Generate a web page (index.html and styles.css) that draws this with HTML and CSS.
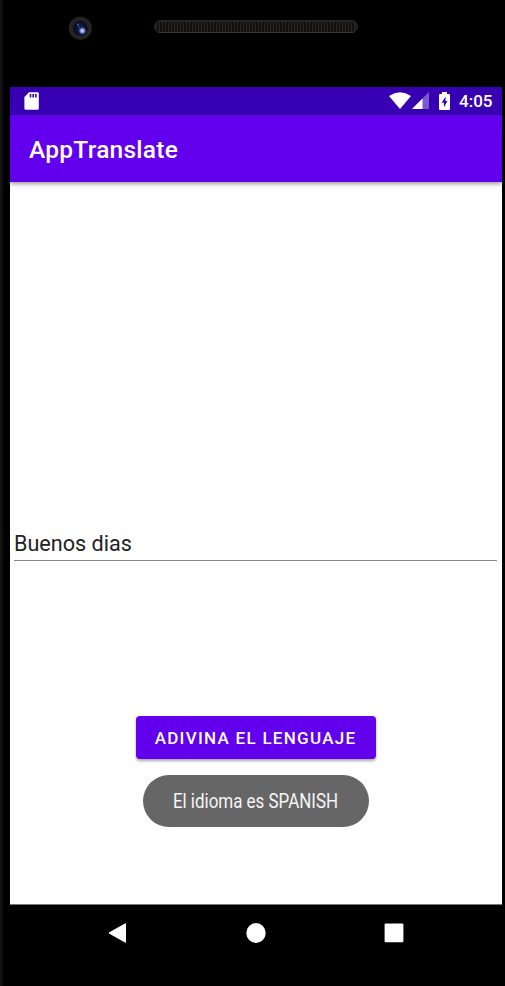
FILE: index.html
```
<!DOCTYPE html>
<html lang="es">
<head>
<meta charset="utf-8">
<title>AppTranslate</title>
<link rel="stylesheet" href="styles.css">
</head>
<body>
<div class="phone">
  <div class="bezel">
    <svg class="camera" width="24" height="24" viewBox="0 0 24 24">
      <defs>
        <radialGradient id="lens"><stop offset="0" stop-color="#18245c"/><stop offset=".65" stop-color="#0c1233"/><stop offset="1" stop-color="#0b0b0e"/></radialGradient>
        <radialGradient id="glint"><stop offset="0" stop-color="#e0e8ff"/><stop offset=".5" stop-color="#7189dc"/><stop offset="1" stop-color="#26367a" stop-opacity="0"/></radialGradient>
      </defs>
      <circle cx="12.300" cy="12.200" r="11.500" fill="#242424"/>
      <circle cx="12.300" cy="12.200" r="7.400" fill="url(#lens)"/>
      <circle cx="14.300" cy="14.800" r="4.300" fill="url(#glint)"/>
      <circle cx="10" cy="8.400" r="1" fill="#4861b5"/>
      <circle cx="11" cy="11" r=".8" fill="#354c9a"/>
    </svg>
    <div class="speaker"></div>
  </div>
  <main class="screen">
    <div class="status">
      <svg class="sd" width="15" height="18" viewBox="0 0 15 18"><path d="M5 .2h8.400q1.400 0 1.400 1.400v14.600q0 1.500-1.400 1.500H2Q.4 17.700.4 16.200V5z" fill="#fff"/><path d="M6.500 2v3.500M9.200 2v3.500M11.900 2v3.500" stroke="#3700b3" stroke-width="1.600"/></svg>
      <svg class="wifi" width="22" height="17" viewBox="0 0 22 17"><path d="M0 4Q11-3.400 22 4L11 17z" fill="#fff"/></svg>
      <svg class="signal" width="17" height="17" viewBox="0 0 17 17"><path d="M17 0v17H0z" fill="#fff" opacity=".35"/><path d="M10.500 6.500V17H0z" fill="#fff"/></svg>
      <svg class="battery" width="11" height="18" viewBox="0 0 11 18"><path d="M3 0h5v2h2q1 0 1 1v14q0 1-1 1H1q-1 0-1-1V3q0-1 1-1h2z" fill="#fff"/><path d="M6.500 4.500 2.700 10.700h2.200v4.600L8.500 9H6.500z" fill="#3700b3"/></svg>
      <span class="time">4:05</span>
    </div>
    <header class="appbar"><h1>AppTranslate</h1></header>
    <section class="content">
      <div class="field"><span>Buenos dias</span></div>
      <button class="guess"><span>ADIVINA EL LENGUAJE</span></button>
      <div class="toast"><span>El idioma es SPANISH</span></div>
    </section>
  </main>
  <nav class="nav">
    <svg width="20" height="22" viewBox="0 0 20 22"><path d="M2 11 18.500 1.700v18.600z" fill="#fff" stroke="#fff" stroke-linejoin="round"/></svg>
    <svg width="20" height="22" viewBox="0 0 20 22"><ellipse cx="10" cy="11" rx="9.700" ry="10" fill="#fff"/></svg>
    <svg width="20" height="22" viewBox="0 0 20 22"><rect x=".6" y="1.600" width="18.800" height="18.600" rx="1" fill="#fff"/></svg>
  </nav>
</div>
</body>
</html>
```
FILE: styles.css
```
* { box-sizing: border-box; }
body { margin: 0; background: #000; font-family: Roboto, sans-serif; }
.phone {
  width: 505px;
  height: 986px;
  padding: 0 3px 0 10px;
  background: linear-gradient(90deg, #151515 0, #111 2px, #000 4px);
  overflow: hidden;
}
.bezel { height: 87px; display: flex; align-items: flex-start; }
.camera { margin: 16px 0 0 58px; }
.speaker {
  width: 204px;
  height: 13px;
  margin: 20px 0 0 62px;
  border: 2px solid #252325;
  border-bottom: 1px solid #3b3936;
  border-radius: 7px;
  background: repeating-linear-gradient(90deg, #292520 0 1px, #11100e 1px 3px);
}
.screen { height: 818px; background: #fff; border-bottom: 1px solid #777; }
.status {
  height: 28px;
  display: flex;
  align-items: flex-start;
  background: #3700b3;
  color: #fff;
}
.sd { margin: 5px 0 0 13.500px; }
.wifi { margin: 5px 0 0 350.500px; }
.signal { margin: 5px 0 0 1px; }
.battery { margin: 5px 0 0 10px; }
.time { margin-left: 9px; font-size: 17px; line-height: 29px; font-weight: 500; }
.appbar {
  height: 67px;
  padding-left: 19px;
  display: flex;
  align-items: center;
  background: #6200ee;
  color: #fff;
  box-shadow: 0 2px 4px rgba(0, 0, 0, .38);
}
h1 { margin: 2px 0 0; font-size: 24.500px; line-height: 30px; font-weight: 500; letter-spacing: .25px; }
.content { display: flex; flex-direction: column; align-items: center; padding: 342px 1px 0 0; }
.field {
  width: 483px;
  height: 37px;
  border-bottom: 1px solid #888;
  color: #222;
  font-size: 21.600px;
  line-height: 40px;
}
.guess {
  width: 240px;
  height: 43px;
  margin-top: 155px;
  padding: 0;
  border: 0;
  border-radius: 4px;
  background: #6200ee;
  color: #fff;
  box-shadow: 0 2px 3px rgba(0, 0, 0, .35);
  font: 500 17px/44px Roboto, sans-serif;
  letter-spacing: 1.280px;
  white-space: nowrap;
}
.toast {
  width: 226px;
  height: 52px;
  margin-top: 16px;
  display: flex;
  justify-content: center;
  border-radius: 26px;
  background: #666;
  color: #f5f5f5;
  font-size: 19.600px;
  line-height: 54px;
  white-space: nowrap;
}
.toast span { transform: scaleX(.865); }
.nav { display: flex; justify-content: center; gap: 118.500px; padding: 17px 1px 0 0; }
```
